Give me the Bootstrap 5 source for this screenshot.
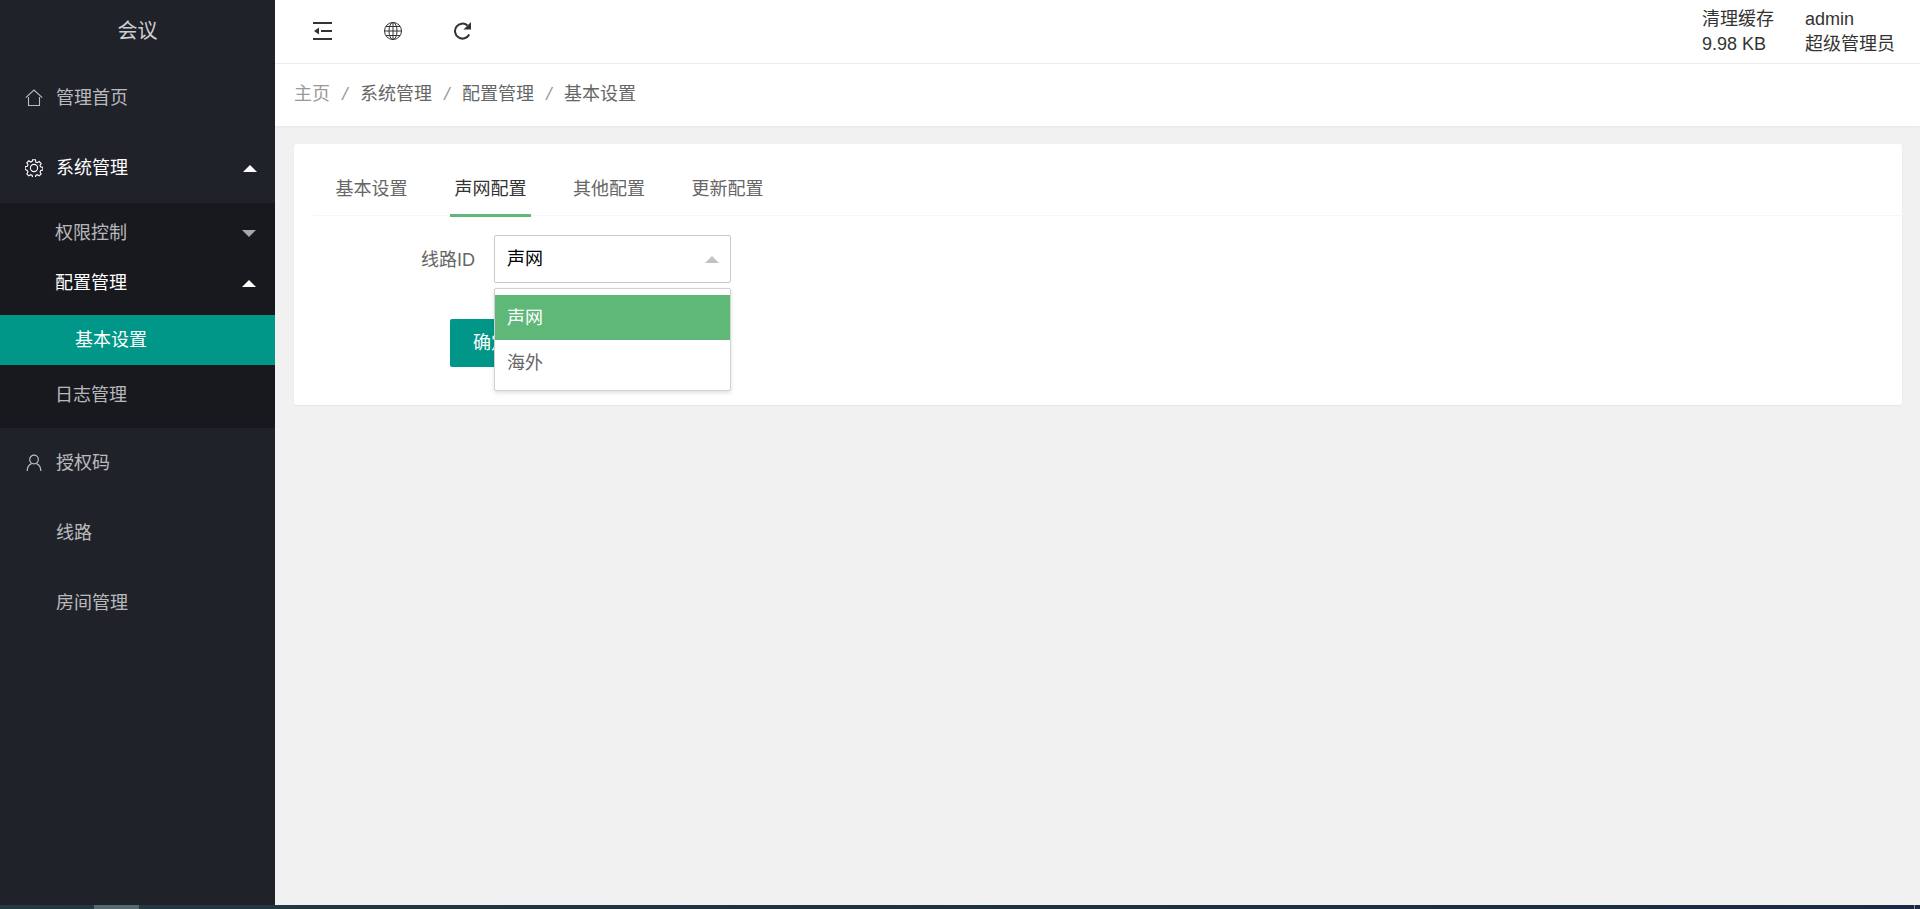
<!DOCTYPE html>
<html lang="zh-CN">
<head>
<meta charset="utf-8">
<title>基本设置</title>
<link href="https://cdn.jsdelivr.net/npm/bootstrap@5.3.0/dist/css/bootstrap.min.css" rel="stylesheet">
<style>
html,body{height:100%;overflow:hidden}
body{font-family:"Liberation Sans","Noto Sans CJK SC",sans-serif;font-size:18px;color:#666;background:#f1f1f1;display:flex;flex-direction:column}
.shell{flex:1 1 auto;min-height:0}
.side{width:275px;flex:none;background:#20222a;color:rgba(255,255,255,.7)}
.brand{height:63px;font-size:20px;color:rgba(255,255,255,.8);padding-bottom:1px;box-shadow:0 1px 0 rgba(0,0,0,.05)}
.top-item{height:70px;padding:0 18px 0 25px}
.top-item svg.ico{width:18px;height:18px;margin-right:14px;flex:none}
.label-text{margin-left:-1px}
.no-ico{padding-left:56px}
.is-open{color:#fff}
.subgroup{background:#18191f;padding:5px 0 8px}
.sub-item{height:50px;padding:1px 19px 0 55px}
.leaf-active{height:50px;margin:7px 0 5px;padding-left:75px;background:#009688;color:#fff}
.tri{width:0;height:0;border-left:7px solid transparent;border-right:7px solid transparent;margin-left:auto}
.tri-up{border-bottom:7px solid #fff}
.tri-down{border-top:7px solid #a6a7aa}
.main-col{min-width:0}
.topbar{height:63px;background:#fff;color:#333;box-shadow:0 1px 1px rgba(0,0,0,.02);padding:0 25px 0 38px;position:relative;z-index:2}
.topbar svg{width:20px;height:18px;color:#333}
.tool-row{gap:50px;margin-top:-1px}
.cache-col{line-height:25px;margin-top:1px}
.crumbs{height:62px;background:#fff;padding-left:19px;box-shadow:0 1px 2px rgba(0,0,0,.05);margin-top:1px;gap:10px;padding-bottom:1px}
.crumb-home{color:#999}
.crumb-sep{color:#999;width:10px;text-align:center;font-style:italic;font-size:19px}
.panel-box{margin:18px 18px 0 19px;height:261px;background:#fff;border-radius:3px;box-shadow:0 1px 2px rgba(0,0,0,.05);padding:0 0 0 19px}
.tabs-row{height:72px;border-bottom:1px solid #f6f6f6;padding-left:18px;gap:37.5px;margin:0}
.tab-link{width:81px;height:73px;padding-top:32px;text-align:center;color:#666;position:relative;line-height:27px}
.tab-link+.tab-link{padding-left:1px}
.tab-on{color:#333;border-bottom:3px solid #5fb878}
.field-row{margin-top:19px;height:48px}
.field-label{width:162px;text-align:right;line-height:50px;color:#666}
.pick-wrap{width:237px;margin-left:19px;position:relative}
.pick-box{height:48px;border:1px solid #c9c9c9;border-radius:2px;padding:1px 12px 0;color:#000;background:#fff}
.pick-tri{width:0;height:0;border-left:7px solid transparent;border-right:7px solid transparent;border-bottom:7px solid #c2c2c2;margin-left:auto;margin-right:-1px}
.pick-menu{position:absolute;left:0;right:0;top:53px;height:103px;background:#fff;border:1px solid #d2d2d2;border-radius:2px;padding:6px 0;box-shadow:0 2px 4px rgba(0,0,0,.12);z-index:3}
.pick-opt{height:45px;padding:1px 0 0 12px;color:#666}
.pick-on{background:#5fb878;color:#fff}
.go-btn{margin:36px 0 0 137px;height:48px;width:150px;background:#009688;color:#fff;border:0;border-radius:2px;font-size:18px;text-align:left;padding:0 0 0 23px}
.go-btn:hover{background:#009688;color:#fff}
.strip{height:4px;flex:none;background:linear-gradient(90deg,#213a41,#1a2a44);position:relative}
.strip-thumb{position:absolute;left:94px;width:45px;top:0;bottom:0;background:#556a6e}
.strip-end{position:absolute;right:5px;width:1px;top:0;bottom:0;background:#8a93a0}
</style>
</head>
<body>
<div class="shell d-flex">
  <aside class="side d-flex flex-column">
    <div class="brand d-flex align-items-center justify-content-center">会议</div>
    <div class="top-item d-flex align-items-center">
      <svg class="ico" viewBox="0 0 18 18" fill="none" stroke="currentColor" stroke-width="1.1"><path d="M.8 8.6 9 1l8.2 7.6M3.5 8v8.5h11V8"/></svg><span class="label-text">管理首页</span>
    </div>
    <div class="top-item d-flex align-items-center is-open">
      <svg class="ico" viewBox="0 0 18 18" fill="none" stroke="currentColor" stroke-width="1.1"><path d="M7.6 1h2.8l.4 2.2 1.5.7 1.9-1.2 2 2-1.2 1.9.7 1.5 2.2.4v2.8l-2.2.4-.7 1.5 1.2 1.9-2 2-1.9-1.2-1.5.7-.4 2.2H7.600l-.4-2.200-1.500-.7-1.900 1.200-2-2 1.200-1.900-.7-1.500L.1 10.600V7.800l2.200-.4.7-1.500L1.800 4l2-2 1.900 1.200 1.500-.7z" transform="translate(0 -.2)"/><circle cx="9" cy="9" r="3.600"/></svg><span class="label-text">系统管理</span><span class="tri tri-up"></span>
    </div>
    <div class="subgroup">
      <div class="sub-item d-flex align-items-center">权限控制<span class="tri tri-down"></span></div>
      <div class="sub-item d-flex align-items-center is-open">配置管理<span class="tri tri-up"></span></div>
      <div class="leaf-active d-flex align-items-center">基本设置</div>
      <div class="sub-item d-flex align-items-center">日志管理</div>
    </div>
    <div class="top-item d-flex align-items-center">
      <svg class="ico" viewBox="0 0 18 18" fill="none" stroke="currentColor" stroke-width="1.200"><circle cx="9" cy="5.500" r="4.300"/><path d="M2.200 17c0-4 2.200-6.500 4.300-7.400M15.800 17c0-4-2.200-6.500-4.300-7.400"/></svg><span class="label-text">授权码</span>
    </div>
    <div class="top-item no-ico d-flex align-items-center"><span class="label-text ms-0">线路</span></div>
    <div class="top-item no-ico d-flex align-items-center"><span class="label-text ms-0">房间管理</span></div>
  </aside>
  <main class="main-col flex-grow-1 d-flex flex-column">
    <header class="topbar d-flex align-items-center">
      <div class="tool-row d-flex align-items-center">
        <svg viewBox="0 0 20 18" fill="currentColor"><path d="M0 0h19v2H0zM8 8h11v2H8zM0 16h19v2H0zM1 9l5-3.500v7z"/></svg>
        <svg viewBox="0 0 20 18" fill="none" stroke="currentColor" stroke-width="1"><ellipse cx="10" cy="9" rx="8.500" ry="8.500"/><ellipse cx="10" cy="9" rx="4" ry="8.500"/><path d="M10 .5v17M1.500 9h17M2.800 4.500h14.400M2.800 13.500h14.400"/></svg>
        <svg viewBox="0 0 20 18" fill="none" stroke="currentColor" stroke-width="2"><path d="M16.200 12.500A7.500 7.500 0 1 1 14.500 3.500"/><path d="M18 0v7.500h-7.500z" fill="currentColor" stroke="none"/></svg>
      </div>
      <div class="ms-auto d-flex cache-col">
        <div style="width:103px"><div>清理缓存</div><div>9.98 KB</div></div>
        <div><div>admin</div><div>超级管理员</div></div>
      </div>
    </header>
    <nav class="crumbs d-flex align-items-center">
      <span class="crumb-home">主页</span><span class="crumb-sep">/</span><span>系统管理</span><span class="crumb-sep">/</span><span>配置管理</span><span class="crumb-sep">/</span><span>基本设置</span>
    </nav>
    <section class="panel-box">
      <ul class="tabs-row nav">
        <li class="tab-link">基本设置</li>
        <li class="tab-link tab-on">声网配置</li>
        <li class="tab-link">其他配置</li>
        <li class="tab-link">更新配置</li>
      </ul>
      <div class="field-row d-flex">
        <label class="field-label">线路ID</label>
        <div class="pick-wrap">
          <div class="pick-box d-flex align-items-center">声网<span class="pick-tri"></span></div>
          <div class="pick-menu">
            <div class="pick-opt pick-on d-flex align-items-center">声网</div>
            <div class="pick-opt d-flex align-items-center">海外</div>
          </div>
        </div>
      </div>
      <button class="btn go-btn" type="button">确定</button>
    </section>
  </main>
</div>
<div class="strip"><span class="strip-thumb"></span><span class="strip-end"></span></div>
<script src="https://cdn.jsdelivr.net/npm/bootstrap@5.3.0/dist/js/bootstrap.bundle.min.js"></script>
</body>
</html>
